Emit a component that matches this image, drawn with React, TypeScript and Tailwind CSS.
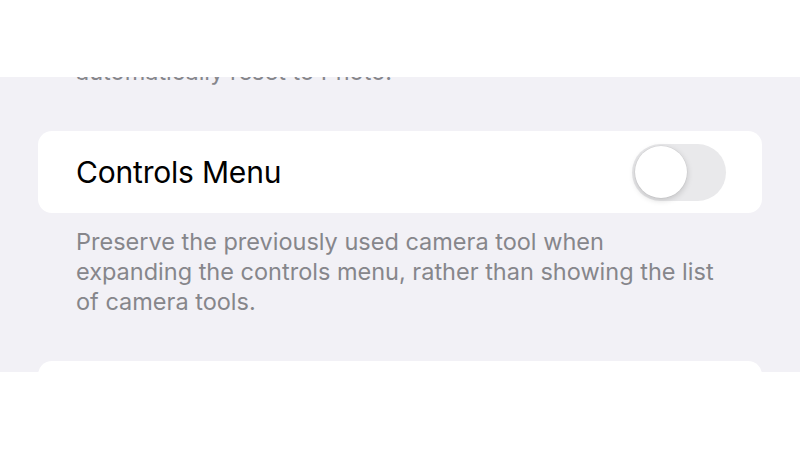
import React, { useState } from 'react';

const font = { fontFamily: 'Inter, "Noto Sans", sans-serif' };

function Toggle({ on, onChange }: { on: boolean; onChange: (v: boolean) => void }) {
  return (
    <button
      onClick={() => onChange(!on)}
      className={`relative w-[94px] h-[57px] rounded-full transition-colors ${on ? 'bg-[#34c759]' : 'bg-[#e9e9eb]'}`}
    >
      <span
        className={`absolute top-[2.5px] w-[52px] h-[52px] rounded-full bg-white shadow-[0_2px_6px_rgba(0,0,0,0.18),0_0_0_0.5px_rgba(0,0,0,0.06)] transition-all ${on ? 'left-[40px]' : 'left-[2.5px]'}`}
      />
    </button>
  );
}

export default function App() {
  const [preserve, setPreserve] = useState(false);

  return (
    <div className="w-[800px] h-[450px] bg-white flex flex-col" style={font}>
      <div className="h-[77px] shrink-0" />
      <div className="h-[295px] shrink-0 bg-[#f2f1f6] overflow-hidden px-[38px]">
        <p className="mt-[-20px] pl-[38px] text-[23.5px] leading-[30px] text-[#86868b]">
          automatically reset to Photo.
        </p>

        <div className="mt-[44px] h-[82px] bg-white rounded-[14px] flex items-center justify-between pl-[38px] pr-[36px]">
          <span className="text-[30px] text-black tracking-[-0.2px]">Controls Menu</span>
          <Toggle on={preserve} onChange={setPreserve} />
        </div>

        <p className="mt-[14px] pl-[38px] text-[23.5px] leading-[30px] text-[#86868b]">
          Preserve the previously used camera tool when
          <br />
          expanding the controls menu, rather than showing the list
          <br />
          of camera tools.
        </p>

        <div className="mt-[44px] h-[82px] bg-white rounded-[14px]" />
      </div>
      <div className="flex-1" />
    </div>
  );
}
